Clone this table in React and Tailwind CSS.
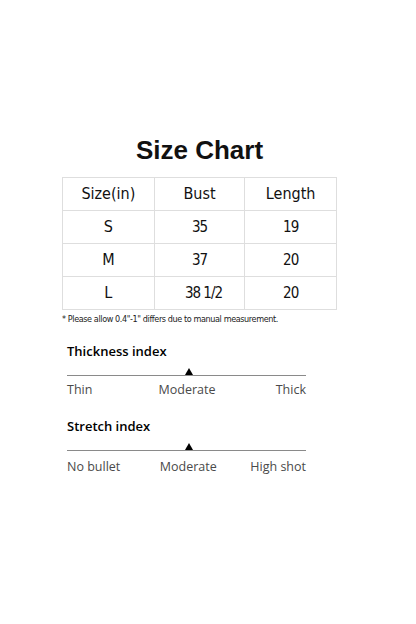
import React from "react";

const rows = [
  { size: "S", bust: "35", length: "19" },
  { size: "M", bust: "37", length: "20" },
  { size: "L", bust: "38 1/2", length: "20" },
];

function IndexScale({ title, labels, gap }) {
  return (
    <div className="w-[239px]">
      <h3 className="text-[13px] font-semibold text-black leading-none">
        {title}
      </h3>
      <div className="relative mt-[17px] h-px bg-[#8a8a8a]">
        <div className="absolute left-[118px] -top-[7px] h-0 w-0 border-x-[4px] border-b-[7px] border-x-transparent border-b-black" />
      </div>
      <div
        className={`${gap} flex justify-between text-[12.5px] text-[#4a4a4a] leading-none`}
      >
        <span>{labels[0]}</span>
        <span className="ml-[6px]">{labels[1]}</span>
        <span>{labels[2]}</span>
      </div>
    </div>
  );
}

export default function App() {
  return (
    <div className="min-h-screen w-[416px] bg-white font-['Open_Sans',sans-serif]">
      <div className="pt-[137px] pl-[62px]">
        <div className="w-[275px] font-['DejaVu_Sans_Condensed','DejaVu_Sans',sans-serif] text-[#111]">
          <h1 className="text-center font-['Liberation_Sans',sans-serif] text-[26px] font-bold tracking-[0px] text-[#111] leading-none">
            Size Chart
          </h1>

          {/* TABLE */}
          <table className="mt-[14px] w-[275px] border-collapse">
            <thead>
              <tr className="h-[33px]">
                <th className="w-[92px] border border-[#dedede] text-[16px] font-normal">
                  Size(in)
                </th>
                <th className="w-[91px] border border-[#dedede] text-[16px] font-normal">
                  Bust
                </th>
                <th className="w-[92px] border border-[#dedede] text-[16px] font-normal">
                  Length
                </th>
              </tr>
            </thead>
            <tbody>
              {rows.map((r) => (
                <tr key={r.size} className="h-[33px]">
                  <td className="border border-[#dedede] text-center text-[16px]">
                    {r.size}
                  </td>
                  <td className="border border-[#dedede] text-center text-[15px] tracking-[-1px]">
                    <span className={r.size === "L" ? "ml-[8px]" : ""}>
                      {r.bust}
                    </span>
                  </td>
                  <td className="border border-[#dedede] text-center text-[15px] tracking-[-1px]">
                    {r.length}
                  </td>
                </tr>
              ))}
            </tbody>
          </table>
          <p className="mt-[5px] text-[9px] tracking-[-0.4px] text-[#222] leading-none">
            * Please allow 0.4"-1" differs due to manual measurement.
          </p>
        </div>

        {/* INDEXES */}
        <div className="mt-[21px] ml-[5px] flex flex-col gap-[23px]">
          <IndexScale
            title="Thickness index"
            labels={["Thin", "Moderate", "Thick"]}
            gap="mt-[8px]"
          />
          <IndexScale
            title="Stretch index"
            labels={["No bullet", "Moderate", "High shot"]}
            gap="mt-[10px]"
          />
        </div>
      </div>
    </div>
  );
}
